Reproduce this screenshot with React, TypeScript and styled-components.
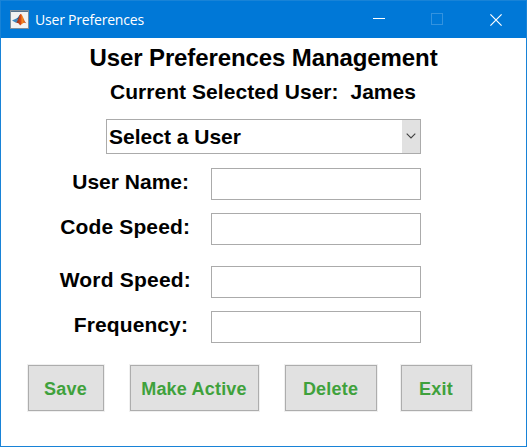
import React from "react";
import styled, { createGlobalStyle } from "styled-components";

const GlobalStyle = createGlobalStyle`
  *, *::before, *::after { box-sizing: border-box; }
  body { margin: 0; background: #fff; }
`;

const Window = styled.main`
  width: 527px;
  height: 447px;
  display: flex;
  flex-direction: column;
  border: 1px solid #1883d7;
  background: #fff;
  color: #000;
  font-family: "Liberation Sans", Arial, sans-serif;
  overflow: hidden;
`;

const TitleBar = styled.header`
  height: 37px;
  flex: none;
  display: flex;
  align-items: center;
  background: #0078d7;
  padding: 0 1px 0 9px;
`;

const Caption = styled.span`
  flex: 1;
  margin-left: 6px;
  color: #fff;
  font: 14px/20px "Open Sans", "Noto Sans", sans-serif;
  letter-spacing: -0.2px;
  white-space: nowrap;
`;

const WindowControl = styled.button`
  width: 58.5px;
  height: 37px;
  display: flex;
  align-items: center;
  justify-content: center;
  padding: 0;
  border: 0;
  background: none;

  &:not(:last-child) svg {
    margin-bottom: 1px;
  }
`;

const Heading = styled.h1`
  margin: 6px 0 0;
  text-align: center;
  font-size: 24px;
  line-height: 28px;
  font-weight: bold;
  letter-spacing: -0.1px;
  white-space: nowrap;
`;

const CurrentUser = styled.p`
  margin: 8px 0 0;
  padding-right: 1px;
  text-align: center;
  font-size: 21px;
  line-height: 24px;
  font-weight: bold;
  letter-spacing: 0.05px;
  white-space: pre;
`;

const UserSelect = styled.button`
  width: 315px;
  height: 35px;
  margin: 15px 0 0 105px;
  flex: none;
  display: flex;
  align-items: stretch;
  justify-content: space-between;
  padding: 0;
  border: 1px solid #ababab;
  background: #fff;
  color: #000;
  font: bold 21px/33px "Liberation Sans", Arial, sans-serif;
`;

const SelectValue = styled.span`
  padding-left: 2px;
`;

const SelectArrow = styled.span`
  width: 18px;
  display: flex;
  align-items: center;
  justify-content: center;
  background: #e1e1e1;

  svg {
    margin-right: 1px;
    margin-bottom: 1px;
  }
`;

const Fields = styled.form`
  display: flex;
  flex-direction: column;
  margin-top: 14px;
`;

const FieldRow = styled.label<{ $gap: number; $inset: number; $tracking: number }>`
  height: 32px;
  display: flex;
  margin-top: ${(p) => p.$gap}px;

  > span {
    width: 210px;
    padding-right: ${(p) => p.$inset}px;
    text-align: right;
    font-size: 21px;
    line-height: 28px;
    font-weight: bold;
    letter-spacing: ${(p) => p.$tracking}px;
    white-space: nowrap;
  }
`;

const TextInput = styled.input`
  width: 210px;
  height: 32px;
  padding: 0 4px;
  border: 1px solid #ababab;
  border-radius: 0;
  background: #fff;
  font: bold 21px "Liberation Sans", Arial, sans-serif;
  outline: none;
`;

const Actions = styled.div`
  display: flex;
  margin: 22px 0 0 27px;
`;

const ActionButton = styled.button<{ $width: number; $gap?: number }>`
  width: ${(p) => p.$width}px;
  height: 46px;
  margin-right: ${(p) => p.$gap ?? 0}px;
  padding: 2px 1px 0 0;
  border: 1px solid #adadad;
  box-shadow: 0 0 0 1px #f0f0f0;
  background: #e1e1e1;
  color: #3fa13c;
  font: bold 18px/22px "Liberation Sans", Arial, sans-serif;
  letter-spacing: 0.2px;
  white-space: nowrap;
`;

const AppIcon = () => (
  <svg width="19" height="19" viewBox="0 0 19 19">
    <defs>
      <linearGradient id="peak" x1="0" x2="1">
        <stop offset="0" stopColor="#792b20" />
        <stop offset=".45" stopColor="#d94a17" />
        <stop offset=".6" stopColor="#f58b20" />
        <stop offset="1" stopColor="#b83218" />
      </linearGradient>
    </defs>
    <rect x=".5" y=".5" width="18" height="18" fill="#f2f2f2" stroke="#7d8d9b" />
    <path d="M1 1.5h17" stroke="#54718c" />
    <path d="M2 10.5 6.3 8.6 8.2 10.2 6 12.7z" fill="#3d86bd" />
    <path d="M6.3 8.6C8.5 8 9.1 4.7 10.8 4L8.4 10.5z" fill="#28659c" />
    <path d="M6 12.7C8.5 10.8 9.2 4 10.8 4c1.8 0 3 7 5.6 9.3-2.6-1.6-4.1.3-6.3 2.3-.8-1.8-2-3.2-4.1-2.9z" fill="url(#peak)" />
  </svg>
);

const fields = [
  { name: "User Name:", gap: 0, inset: 22, tracking: 0 },
  { name: "Code Speed:", gap: 13, inset: 21, tracking: 0.12 },
  { name: "Word Speed:", gap: 21, inset: 20, tracking: 0.2 },
  { name: "Frequency:", gap: 13, inset: 23, tracking: 0.1 },
];

export default function App() {
  return (
    <>
      <GlobalStyle />
      <Window>
        <TitleBar>
          <AppIcon />
          <Caption>User Preferences</Caption>
          <WindowControl aria-label="Minimize">
            <svg width="12" height="12" viewBox="0 0 12 12" shapeRendering="crispEdges">
              <path d="M0 5.5h12" stroke="#fff" />
            </svg>
          </WindowControl>
          <WindowControl aria-label="Maximize" disabled>
            <svg width="12" height="12" viewBox="0 0 12 12" shapeRendering="crispEdges">
              <path d="M.5.5h11v11H.5z" fill="none" stroke="#3393df" />
            </svg>
          </WindowControl>
          <WindowControl aria-label="Close">
            <svg width="12" height="12" viewBox="0 0 12 12">
              <path d="m.4.4 11.2 11.2M11.6.4.4 11.6" stroke="#fff" strokeWidth="1.2" />
            </svg>
          </WindowControl>
        </TitleBar>
        <Heading>User Preferences Management</Heading>
        <CurrentUser>{"Current Selected User:  James"}</CurrentUser>
        <UserSelect>
          <SelectValue>Select a User</SelectValue>
          <SelectArrow>
            <svg width="10" height="6" viewBox="0 0 10 6">
              <path d="m.7.7 4.3 4.3L9.3.7" fill="none" stroke="#404040" strokeWidth="1.1" />
            </svg>
          </SelectArrow>
        </UserSelect>
        <Fields>
          {fields.map((f) => (
            <FieldRow key={f.name} $gap={f.gap} $inset={f.inset} $tracking={f.tracking}>
              <span>{f.name}</span>
              <TextInput />
            </FieldRow>
          ))}
        </Fields>
        <Actions>
          <ActionButton $width={76} $gap={26}>Save</ActionButton>
          <ActionButton $width={129} $gap={26}>Make Active</ActionButton>
          <ActionButton $width={92} $gap={24}>Delete</ActionButton>
          <ActionButton $width={71}>Exit</ActionButton>
        </Actions>
      </Window>
    </>
  );
}
